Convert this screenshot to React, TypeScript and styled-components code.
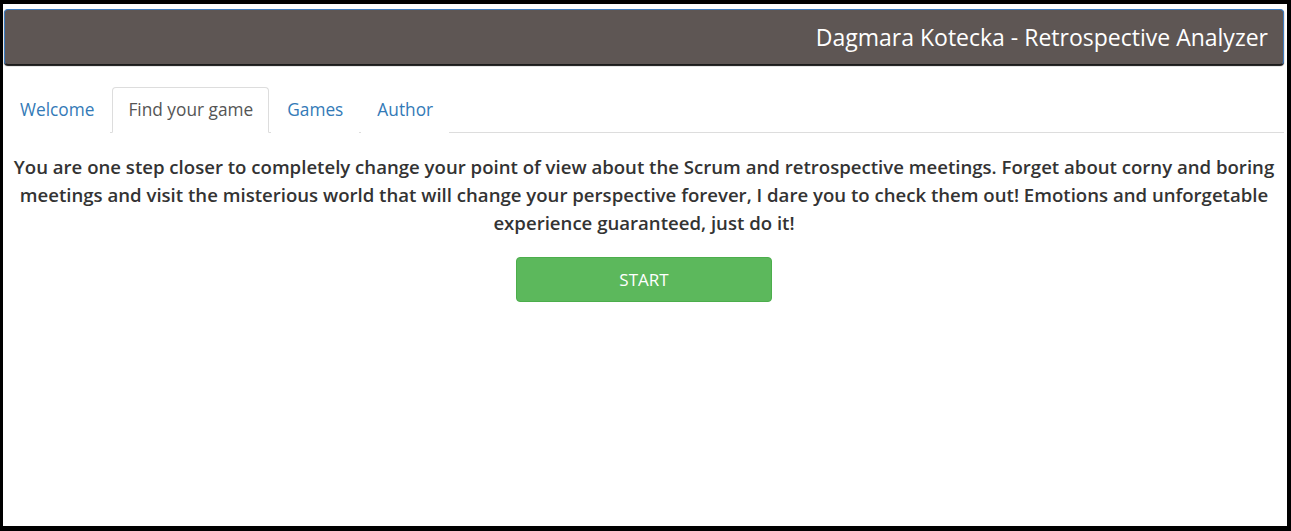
import { createGlobalStyle, styled } from 'styled-components';

const GlobalStyle = createGlobalStyle`
  html, body, #root {
    height: 100%;
  }
  body {
    margin: 0;
    background: #000;
    font-family: "Open Sans", "Noto Sans", sans-serif;
    color: #333;
  }
  * {
    box-sizing: border-box;
  }
`;

const tabs = ['Welcome', 'Find your game', 'Games', 'Author'];

const App = () => {
  return (
    <SFrame>
      <GlobalStyle />
      <SPage>
        <SNavbar>
          <SBrand>Dagmara Kotecka - Retrospective Analyzer</SBrand>
        </SNavbar>
        <STabs>
          {tabs.map(tab => (
            <STab key={tab} $active={tab === 'Find your game'}>
              {tab}
            </STab>
          ))}
        </STabs>
        <SContent>
          <SIntro>
            You are one step closer to completely change your point of view about the Scrum and
            retrospective meetings. Forget about corny and boring meetings and visit the misterious
            world that will change your perspective forever, I dare you to check them out! Emotions
            and unforgetable experience guaranteed, just do it!
          </SIntro>
          <SStartButton type="button">START</SStartButton>
        </SContent>
      </SPage>
    </SFrame>
  );
};

const SFrame = styled.div`
  height: 100%;
  padding: 4px 4px 5px 3px;
`;

const SPage = styled.main`
  height: 100%;
  background-color: #fff;
  padding: 5px 3px 0 1px;
`;

const SNavbar = styled.header`
  display: flex;
  justify-content: flex-end;
  align-items: center;
  height: 56px;
  padding: 0 15px;
  background-color: #5e5654;
  border: 1px solid #3d7cc0;
  border-bottom-color: #1a1a1a;
  border-radius: 4px;
  box-shadow: 0 1px 1px #111;
`;

const SBrand = styled.h1`
  margin: 0;
  font-size: 23px;
  font-weight: 400;
  color: #fff;
`;

const STabs = styled.nav`
  display: flex;
  margin-top: 22px;
  border-bottom: 1px solid #ddd;
`;

const STab = styled.a<{ $active?: boolean }>`
  margin-right: 2px;
  margin-bottom: -1px;
  padding: 10px 15px;
  font-size: 17.3px;
  line-height: 24px;
  color: ${props => (props.$active ? '#555' : '#337ab7')};
  background-color: #fff;
  border: 1px solid ${props => (props.$active ? '#ddd' : 'transparent')};
  border-bottom-color: transparent;
  border-radius: 4px 4px 0 0;
  cursor: pointer;
`;

const SContent = styled.section`
  display: flex;
  flex-direction: column;
  align-items: center;
  padding: 20px 8px 0;
`;

const SIntro = styled.p`
  margin: 0 0 20px;
  font-size: 18.6px;
  font-weight: 600;
  line-height: 28px;
  text-align: center;
`;

const SStartButton = styled.button`
  width: 256px;
  height: 45px;
  font-family: inherit;
  font-size: 17px;
  color: #fff;
  background-color: #5cb85c;
  border: 1px solid #4cae4c;
  border-radius: 4px;
  cursor: pointer;
`;

export default App;
